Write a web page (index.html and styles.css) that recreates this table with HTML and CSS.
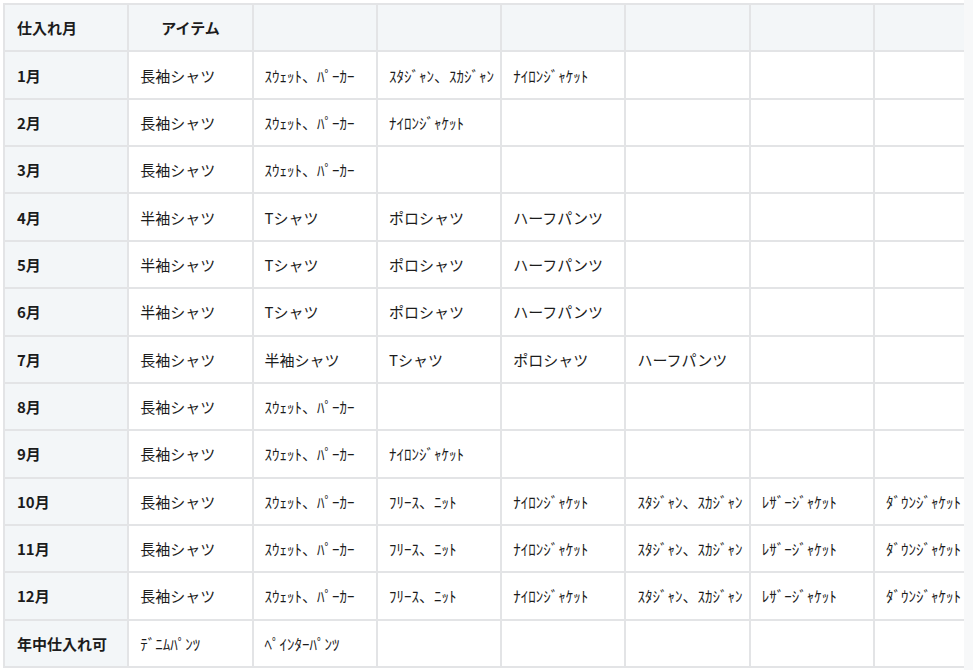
FILE: index.html
```html
<!DOCTYPE html>
<html lang="ja">
<head>
<meta charset="utf-8">
<title>仕入れ月</title>
<link rel="stylesheet" href="styles.css">
</head>
<body>
<div class="page">
  <div class="wrap">
    <table class="stock">
      <colgroup>
        <col class="c"><col class="c"><col class="c"><col class="c"><col class="c"><col class="c"><col class="c"><col class="c">
      </colgroup>
      <thead>
        <tr><th class="first">仕入れ月</th><th class="center">アイテム</th><th></th><th></th><th></th><th></th><th></th><th></th></tr>
      </thead>
      <tbody>
        <tr><th>1月</th><td>長袖シャツ</td><td>ｽｳｪｯﾄ、ﾊﾟｰｶｰ</td><td>ｽﾀｼﾞｬﾝ、ｽｶｼﾞｬﾝ</td><td>ﾅｲﾛﾝｼﾞｬｹｯﾄ</td><td></td><td></td><td></td></tr>
        <tr><th>2月</th><td>長袖シャツ</td><td>ｽｳｪｯﾄ、ﾊﾟｰｶｰ</td><td>ﾅｲﾛﾝｼﾞｬｹｯﾄ</td><td></td><td></td><td></td><td></td></tr>
        <tr><th>3月</th><td>長袖シャツ</td><td>ｽｳｪｯﾄ、ﾊﾟｰｶｰ</td><td></td><td></td><td></td><td></td><td></td></tr>
        <tr><th>4月</th><td>半袖シャツ</td><td>Tシャツ</td><td>ポロシャツ</td><td>ハーフパンツ</td><td></td><td></td><td></td></tr>
        <tr><th>5月</th><td>半袖シャツ</td><td>Tシャツ</td><td>ポロシャツ</td><td>ハーフパンツ</td><td></td><td></td><td></td></tr>
        <tr><th>6月</th><td>半袖シャツ</td><td>Tシャツ</td><td>ポロシャツ</td><td>ハーフパンツ</td><td></td><td></td><td></td></tr>
        <tr><th>7月</th><td>長袖シャツ</td><td>半袖シャツ</td><td>Tシャツ</td><td>ポロシャツ</td><td>ハーフパンツ</td><td></td><td></td></tr>
        <tr><th>8月</th><td>長袖シャツ</td><td>ｽｳｪｯﾄ、ﾊﾟｰｶｰ</td><td></td><td></td><td></td><td></td><td></td></tr>
        <tr><th>9月</th><td>長袖シャツ</td><td>ｽｳｪｯﾄ、ﾊﾟｰｶｰ</td><td>ﾅｲﾛﾝｼﾞｬｹｯﾄ</td><td></td><td></td><td></td><td></td></tr>
        <tr><th>10月</th><td>長袖シャツ</td><td>ｽｳｪｯﾄ、ﾊﾟｰｶｰ</td><td>ﾌﾘｰｽ、ﾆｯﾄ</td><td>ﾅｲﾛﾝｼﾞｬｹｯﾄ</td><td>ｽﾀｼﾞｬﾝ、ｽｶｼﾞｬﾝ</td><td>ﾚｻﾞｰｼﾞｬｹｯﾄ</td><td>ﾀﾞｳﾝｼﾞｬｹｯﾄ</td></tr>
        <tr><th>11月</th><td>長袖シャツ</td><td>ｽｳｪｯﾄ、ﾊﾟｰｶｰ</td><td>ﾌﾘｰｽ、ﾆｯﾄ</td><td>ﾅｲﾛﾝｼﾞｬｹｯﾄ</td><td>ｽﾀｼﾞｬﾝ、ｽｶｼﾞｬﾝ</td><td>ﾚｻﾞｰｼﾞｬｹｯﾄ</td><td>ﾀﾞｳﾝｼﾞｬｹｯﾄ</td></tr>
        <tr><th>12月</th><td>長袖シャツ</td><td>ｽｳｪｯﾄ、ﾊﾟｰｶｰ</td><td>ﾌﾘｰｽ、ﾆｯﾄ</td><td>ﾅｲﾛﾝｼﾞｬｹｯﾄ</td><td>ｽﾀｼﾞｬﾝ、ｽｶｼﾞｬﾝ</td><td>ﾚｻﾞｰｼﾞｬｹｯﾄ</td><td>ﾀﾞｳﾝｼﾞｬｹｯﾄ</td></tr>
        <tr><th>年中仕入れ可</th><td>ﾃﾞﾆﾑﾊﾟﾝﾂ</td><td>ﾍﾟｲﾝﾀｰﾊﾟﾝﾂ</td><td></td><td></td><td></td><td></td><td></td></tr>
      </tbody>
    </table>
  </div>
  <div class="strip"></div>
</div>
</body>
</html>
```

FILE: styles.css
```css
html, body {
  margin: 0;
  padding: 0;
  background: #ffffff;
}
.page {
  display: flex;
  height: 670px;
  overflow: hidden;
}
.wrap {
  width: 961px;
  flex: none;
  padding: 3px 0 0 3px;
  overflow: hidden;
}
.strip {
  flex: 1;
  background: #f7f8f9;
}
.stock {
  border-collapse: collapse;
  table-layout: fixed;
  width: 995px;
  font-family: "Noto Sans CJK JP", "Noto Sans", sans-serif;
  font-size: 15px;
  color: #1c1c1c;
}
.stock .c {
  width: 124.3px;
}
.stock th,
.stock td {
  border: 2px solid #e3e4e6;
  height: 45.36px;
  padding: 0 0 0 11px;
  text-align: left;
  vertical-align: middle;
  white-space: nowrap;
  overflow: hidden;
}
.stock th {
  padding-left: 12px;
}
.stock thead th {
  background: #f3f6f8;
  font-weight: 700;
}
.stock tbody th {
  background: #f3f6f8;
  font-weight: 700;
}
.stock td {
  background: #ffffff;
  font-weight: 400;
}
.stock thead th.center {
  text-align: center;
  padding: 0;
}
```
